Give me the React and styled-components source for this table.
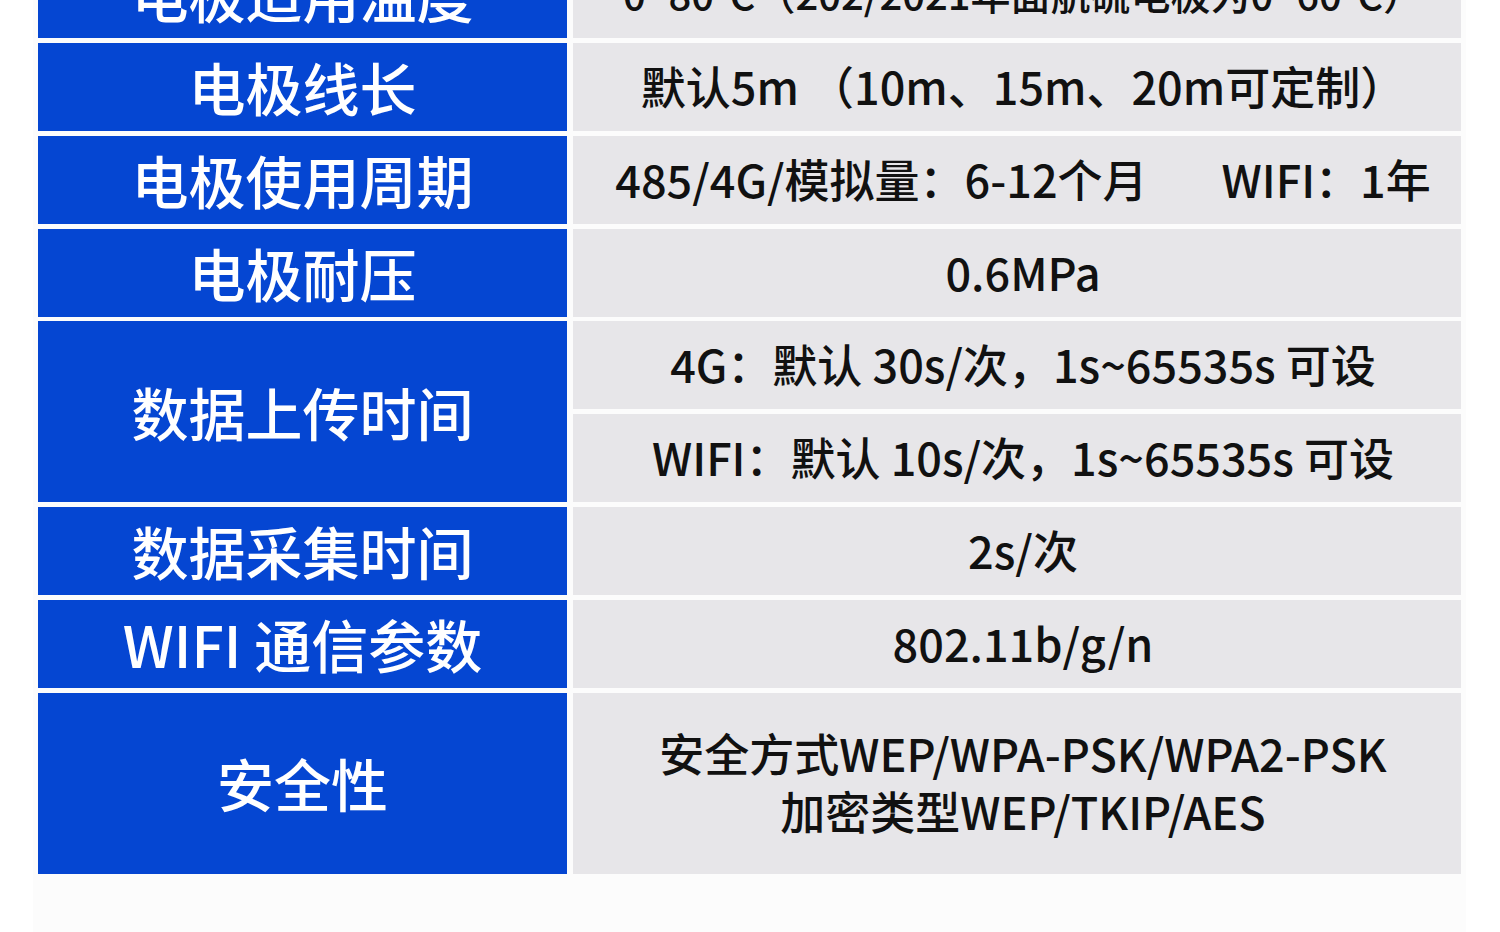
import React from "react";
import styled, { createGlobalStyle } from "styled-components";

const GlobalStyle = createGlobalStyle`
  html, body {
    margin: 0;
    padding: 0;
    background: #ffffff;
    overflow: hidden;
  }
  body {
    font-family: "Noto Sans CJK SC", "Noto Sans", sans-serif;
  }
`;

const Page = styled.div`
  width: 1500px;
  height: 932px;
  overflow: hidden;
`;

const Sheet = styled.div`
  margin: -50px 34px 0 33px;
  padding: 0 5px 80px;
  background: #fcfcfc;
`;

const Table = styled.div`
  display: grid;
  grid-template-columns: 529px 1fr;
  grid-auto-rows: 88px;
  column-gap: 6px;
  row-gap: 4.86px;
`;

const Label = styled.div`
  grid-row: span ${(p) => p.$span || 1};
  background: #0546d2;
  color: #ffffff;
  font-size: 57px;
  font-weight: 500;
  display: flex;
  align-items: center;
  justify-content: center;
  white-space: nowrap;
  padding-bottom: 2px;
`;

const Value = styled.div`
  grid-row: span ${(p) => p.$span || 1};
  background: #e7e6e9;
  color: #111111;
  font-size: ${(p) => p.$size || 45}px;
  font-weight: 500;
  line-height: 58px;
  display: flex;
  flex-direction: column;
  align-items: center;
  justify-content: center;
  text-align: center;
  white-space: nowrap;
  padding: 0 0 2px 12px;
`;

const Spacer = styled.span`
  display: inline-block;
  width: 74px;
`;

const rows = [
  { label: "电极适用温度", size: 40, values: ["0~80°C（202/2021年面航硫电极为0~60°C）"] },
  { label: "电极线长", values: ["默认5m （10m、15m、20m可定制）"] },
  {
    label: "电极使用周期",
    values: [
      <span>
        485/4G/模拟量：6-12个月<Spacer />WIFI：1年
      </span>,
    ],
  },
  { label: "电极耐压", values: ["0.6MPa"] },
  {
    label: "数据上传时间",
    values: ["4G：默认 30s/次，1s~65535s 可设", "WIFI：默认 10s/次，1s~65535s 可设"],
  },
  { label: "数据采集时间", values: ["2s/次"] },
  { label: "WIFI 通信参数", values: ["802.11b/g/n"] },
];

function App() {
  return (
    <Page>
      <GlobalStyle />
      <Sheet>
        <Table>
          {rows.map((row) => (
            <React.Fragment key={row.label}>
              <Label $span={row.values.length}>{row.label}</Label>
              {row.values.map((v, i) => (
                <Value key={i} $size={row.size}>
                  {v}
                </Value>
              ))}
            </React.Fragment>
          ))}
          <Label $span={2}>安全性</Label>
          <Value $span={2}>
            <div>安全方式WEP/WPA-PSK/WPA2-PSK</div>
            <div>加密类型WEP/TKIP/AES</div>
          </Value>
        </Table>
      </Sheet>
    </Page>
  );
}

export default App;
